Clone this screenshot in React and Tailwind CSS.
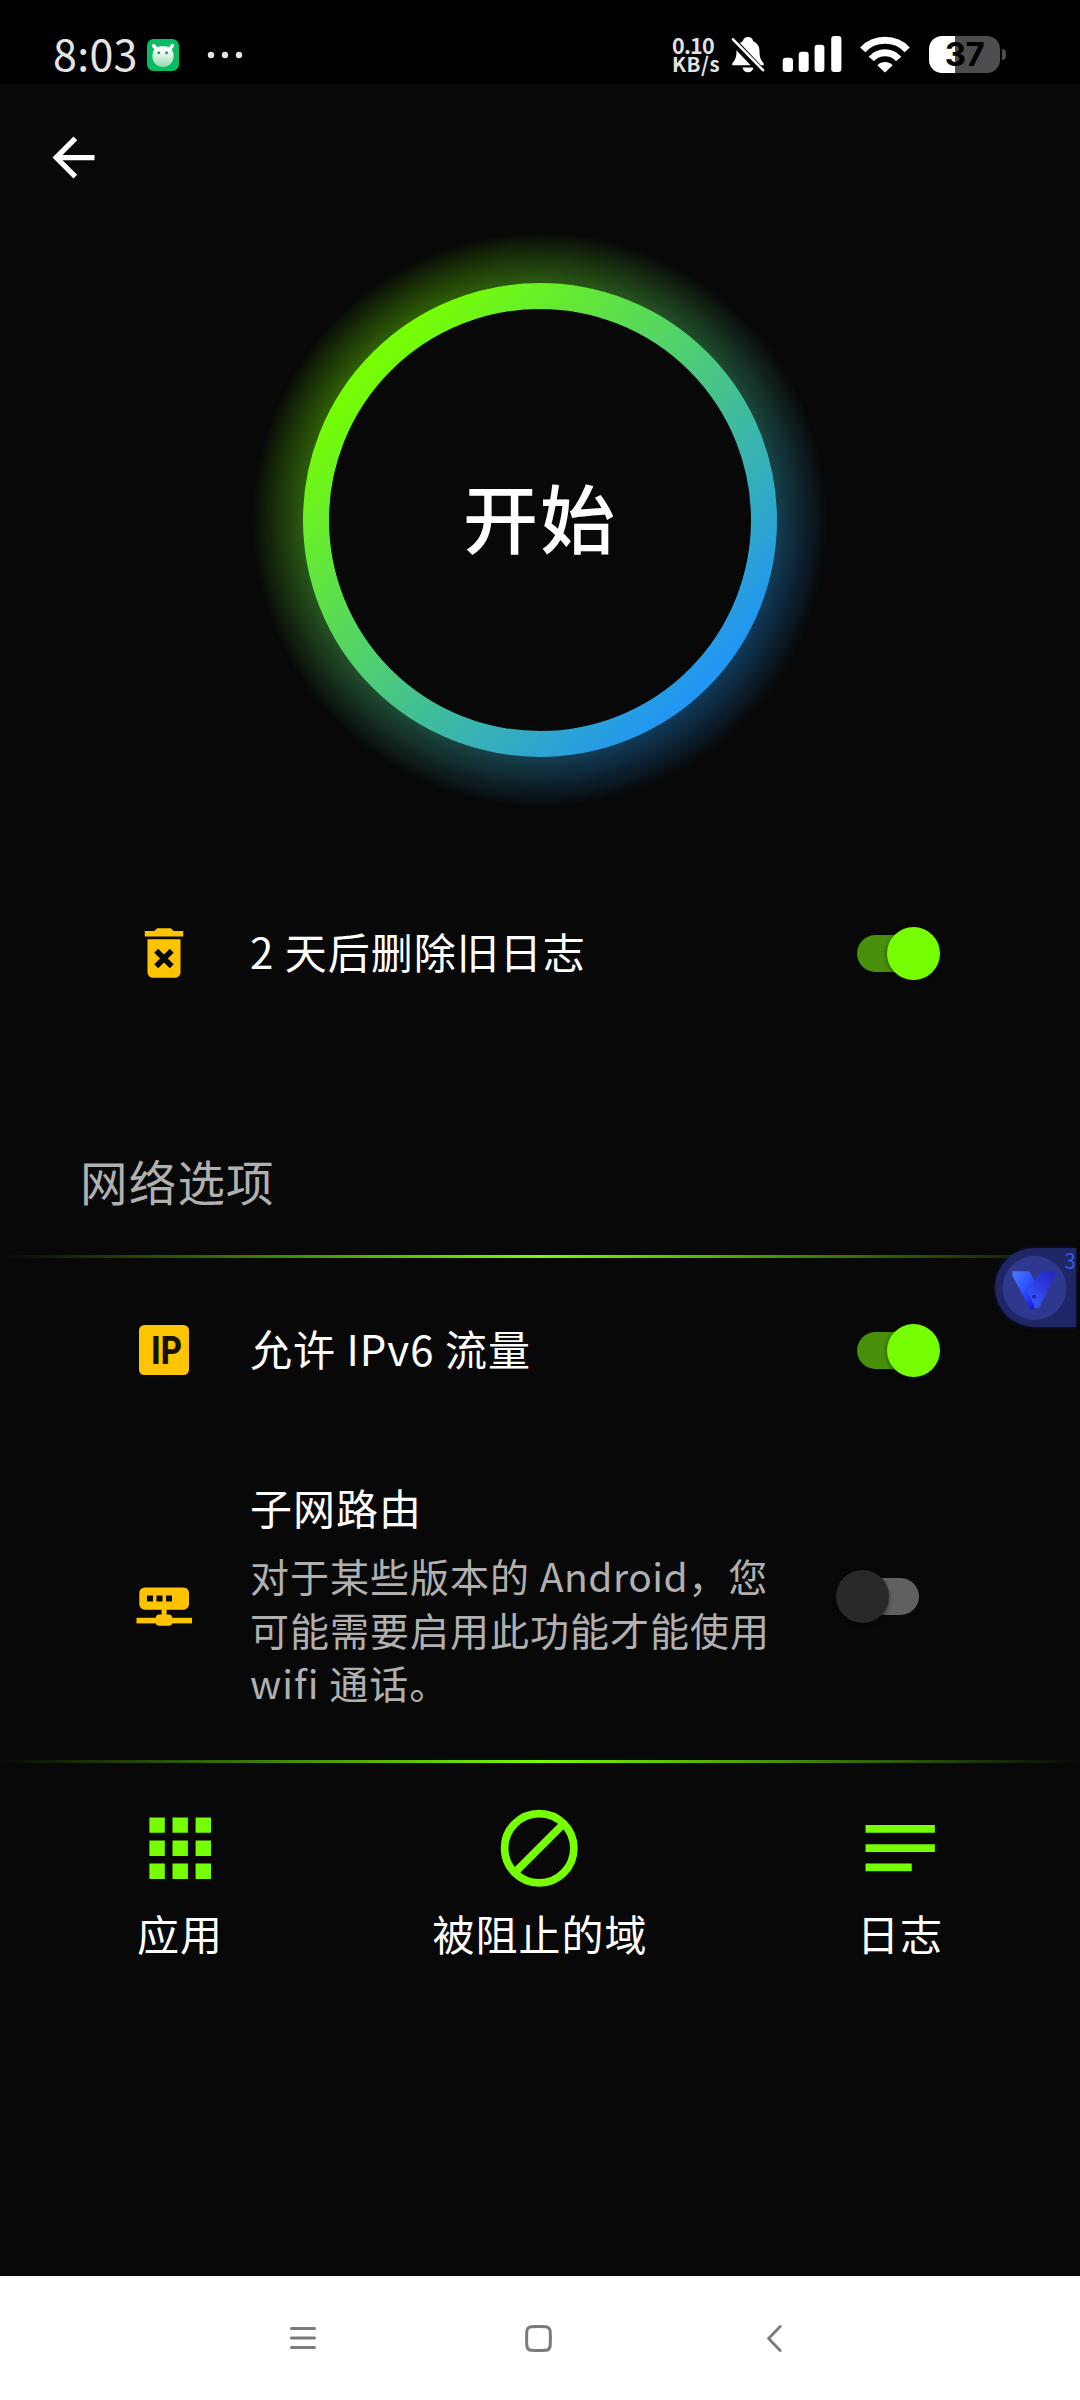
import React from "react";

const GREEN = "#76ff03";
const YELLOW = "#ffc400";

function StatusBar() {
  return (
    <header className="flex h-[84px] shrink-0 items-start bg-black pt-[36px]">
      <div className="-mt-[3px] ml-[53px] w-[94px] whitespace-nowrap text-[43px] leading-[38px] tracking-[0.300px] text-[#e4e4e4]">8:03</div>
      <svg width="32" height="32" viewBox="0 0 32 32" className="mt-[3px]">
        <defs>
          <linearGradient id="face" x1="0" y1="0" x2="0" y2="1">
            <stop offset="0.2" stopColor="#ffffff" />
            <stop offset="1" stopColor="#8fdcae" />
          </linearGradient>
        </defs>
        <rect width="32" height="32" rx="6.5" fill="#06bd63" />
        <path d="M6.6 6.6l3.4 4M25.400 6.600l-3.400 4" stroke="#fff" strokeWidth="3.600" strokeLinecap="round" />
        <path d="M16 7.200c3 0 5 .3 7.300 1.800 2.200 1.800 3.300 4.600 3.300 8C26.600 23.400 22 28 16 28S5.400 23.400 5.400 17c0-3.400 1.100-6.200 3.300-8C11 7.500 13 7.200 16 7.200z" fill="url(#face)" />
        <circle cx="11.800" cy="13.700" r="1.500" fill="#0fae62" />
        <circle cx="19.600" cy="13.700" r="1.500" fill="#0fae62" />
      </svg>
      <svg width="36" height="8" viewBox="0 0 36 8" className="ml-[28px] mt-[15px]" fill="#e4e4e4">
        <circle cx="4" cy="4" r="3.200" />
        <circle cx="18" cy="4" r="3.200" />
        <circle cx="32" cy="4" r="3.200" />
      </svg>
      <div className="ml-[429px] w-[59px] shrink-0 whitespace-nowrap font-bold text-[#e2e2e2]">
        <div className="-mt-[1px] text-[21.500px] leading-[19px] tracking-[-0.800px]">0.10</div>
        <div className="text-[20.500px] leading-[18px] tracking-[0.500px]">KB/s</div>
      </div>
      <svg width="34" height="38" viewBox="0 0 34 38" className="shrink-0">
        <path d="M17 1c2.700 0 4.700 1.600 5.200 4.200C26.500 7 28.500 10.500 28.500 15c0 6 1 8.500 4.200 12.500v1.700H1.300v-1.700C4.500 23.500 5.500 21 5.500 15c0-4.500 2-8 6.300-9.800C12.300 2.600 14.300 1 17 1z" fill="#fff" />
        <path d="M11.500 31.500h11c-.5 3-2.500 4.800-5.500 4.800s-5-1.800-5.500-4.800z" fill="#fff" />
        <path d="M-1 2L33 38" stroke="#000" strokeWidth="7.500" />
        <path d="M2 3.300L32 34.200" stroke="#fff" strokeWidth="2.600" strokeLinecap="round" />
      </svg>
      <svg width="60" height="38" viewBox="0 0 60 38" className="ml-[17px] shrink-0" fill="#fff">
        <rect x="0.700" y="21.700" width="10.300" height="14.300" rx="3" />
        <rect x="16.700" y="15.700" width="10" height="20.300" rx="3" />
        <rect x="32.600" y="8.700" width="9.800" height="27.300" rx="3" />
        <rect x="49.200" y="0" width="10.200" height="36" rx="3" />
      </svg>
      <svg width="50" height="38" viewBox="0 0 50 38" className="ml-[18px] shrink-0">
        <path d="M2.800 13.800C8.500 7.500 16.500 4.300 25 4.300s16.500 3.200 22.200 9.500" fill="none" stroke="#fff" strokeWidth="7" />
        <path d="M11.300 23C15 18.700 19.500 16.700 25 16.700s10 2 13.700 6.300" fill="none" stroke="#fff" strokeWidth="7" />
        <path d="M17.300 29.200c4.400-4.400 11-4.400 15.400 0L25 36.500z" fill="#fff" />
      </svg>
      <div className="ml-[19px] flex h-[37px] w-[71px] shrink-0 items-center justify-center rounded-[13px] bg-[linear-gradient(to_right,#fff_26.500px,#4d4d4d_26.500px)]">
        <span className="font-['Inter'] text-[33px] font-bold leading-[37px] tracking-[-0.500px] text-black">37</span>
      </div>
      <div className="ml-[2px] mt-[13px] h-[11px] w-[4px] rounded-r-full bg-[#4d4d4d]" />
    </header>
  );
}

function StartRing() {
  return (
    <div className="mt-[2px] grid h-[574px] shrink-0 place-items-center *:[grid-area:1/1]">
      <svg width="574" height="574" viewBox="-287 -287 574 574">
        <defs>
          <linearGradient id="ring" gradientUnits="userSpaceOnUse" x1="-162" y1="-162" x2="162" y2="162">
            <stop offset="0" stopColor={GREEN} />
            <stop offset="1" stopColor="#2196f3" />
          </linearGradient>
          <radialGradient id="fade" gradientUnits="userSpaceOnUse" cx="0" cy="0" r="287">
            <stop offset="0.820" stopColor="#fff" stopOpacity="0.360" />
            <stop offset="0.910" stopColor="#fff" stopOpacity="0.190" />
            <stop offset="1" stopColor="#fff" stopOpacity="0.010" />
          </radialGradient>
          <mask id="glow" maskUnits="userSpaceOnUse" x="-287" y="-287" width="574" height="574">
            <circle r="287" fill="url(#fade)" />
          </mask>
        </defs>
        <circle r="287" fill="url(#ring)" mask="url(#glow)" />
        <circle r="224" fill="#080808" stroke="url(#ring)" strokeWidth="26" />
      </svg>
      <button className="-mt-[8px] text-[75px] font-medium leading-[80px] tracking-[2px] text-white">开始</button>
    </div>
  );
}

function Switch({ on }) {
  return on ? (
    <span className="flex h-[53px] w-[83px] items-center">
      <span className="h-[37px] w-[56px] rounded-l-full bg-[#48900b]" />
      <span className="-ml-[26px] size-[53px] shrink-0 rounded-full bg-[#76ff03] shadow-[0_1px_5px_rgba(0,0,0,0.450)]" />
    </span>
  ) : (
    <span className="flex h-[53px] w-[83px] items-center">
      <span className="z-10 size-[53px] shrink-0 rounded-full bg-[#292929] shadow-[0_2px_4px_rgba(0,0,0,0.500)]" />
      <span className="-ml-[26px] h-[37px] w-[56px] rounded-r-full bg-[#606060]" />
    </span>
  );
}

function Divider() {
  return <div className="h-[3px] shrink-0 bg-[linear-gradient(to_right,transparent,#76ff03_50%,transparent)]" />;
}

const TrashIcon = () => (
  <svg width="66" height="66" viewBox="0 0 24 24" fill={YELLOW} className="-mt-[2px]">
    <path d="M6 19c0 1.100.9 2 2 2h8c1.100 0 2-.9 2-2V7H6v12zm2.460-7.120l1.410-1.410L12 12.590l2.120-2.120 1.410 1.410L13.410 14l2.120 2.120-1.410 1.410L12 15.410l-2.120 2.120-1.410-1.410L10.590 14l-2.130-2.120zM15.500 4l-1-1h-5l-1 1H5v2h14V4z" />
  </svg>
);

const IpIcon = () => (
  <svg width="66" height="66" viewBox="0 0 66 66" className="-mt-px">
    <rect x="8" y="8" width="50" height="50" rx="5.500" fill={YELLOW} />
    <text x="20" y="47" fontFamily="Roboto" fontWeight="800" fontSize="39.500" textLength="31" lengthAdjust="spacingAndGlyphs" fill="#171300">IP</text>
  </svg>
);

const RouterIcon = () => (
  <svg width="66" height="66" viewBox="0 0 66 66" className="mt-[21px]" fill={YELLOW}>
    <rect x="8.300" y="13.500" width="49.700" height="22.200" rx="5.500" />
    <rect x="30.600" y="35" width="5" height="8" />
    <rect x="24.800" y="40.500" width="16.400" height="11.300" rx="3.500" />
    <rect x="5.500" y="43.800" width="55.500" height="5.600" />
    <path d="M16 21.500h6v6h-6zM25.500 21.500h6v6h-6zM35 21.500h6v6h-6z" fill="#080808" />
  </svg>
);

function Label({ children }) {
  return <span className="whitespace-nowrap text-[42px] leading-[60px] tracking-[1px] text-white">{children}</span>;
}

function OptionRow({ icon, children, on, className }) {
  return (
    <div className={`flex shrink-0 items-center pl-[131px] ${className}`}>
      {icon}
      <div className="-mt-[6px] ml-[53px] flex w-[607px] flex-col">{children}</div>
      {!on && <span className="-ml-[21px]" />}
      <Switch on={on} />
    </div>
  );
}

function TabItem({ icon, label }) {
  return (
    <button className="flex w-[360px] flex-col items-center">
      <svg width="92.400" height="92.400" viewBox="0 0 24 24" fill={GREEN}>{icon}</svg>
      <span className="mt-[9px] block">
        <Label>{label}</Label>
      </span>
    </button>
  );
}

function FloatingBadge() {
  return (
    <div className="absolute right-[4px] top-[1248px] h-[79px] w-[81px] rounded-l-full bg-[#222a70]/90 shadow-[0_0_4px_#222a7088]">
      <svg width="81" height="79" viewBox="0 0 81 79" className="overflow-visible">
        <defs>
          <linearGradient id="vl" x1="0" y1="0" x2="1" y2="1">
            <stop offset="0" stopColor="#4a7dff" />
            <stop offset="0.550" stopColor="#2b4bfa" />
            <stop offset="1" stopColor="#1010d8" />
          </linearGradient>
          <linearGradient id="vr" x1="1" y1="0" x2="0" y2="1">
            <stop offset="0" stopColor="#2424b8" />
            <stop offset="0.500" stopColor="#2c3ce0" />
            <stop offset="1" stopColor="#3c64ff" />
          </linearGradient>
        </defs>
        <circle cx="39.500" cy="40" r="32" fill="#2e388f" />
        <path d="M17.300 23.300H34L41 35l-3 27-3 -1.800L17.500 28z" fill="url(#vl)" />
        <path d="M46.500 23.300H63L44.500 59q-1.500 2-4 1L33 45q-.8-1.800.2-3.500z" fill="url(#vr)" />
        <circle cx="39" cy="48.700" r="1.900" fill="#1a22a0" />
        <text x="69.500" y="21.300" fontSize="21.500" fill="#3457e6" textLength="11.200" lengthAdjust="spacingAndGlyphs">3</text>
      </svg>
    </div>
  );
}

export default function App() {
  return (
    <div className="relative flex h-[2400px] w-[1080px] flex-col overflow-hidden bg-[#080808] font-['Noto_Sans_CJK_SC',sans-serif]">
      <StatusBar />
      <div className="flex h-[147px] shrink-0 items-center pl-[42px]">
        <svg width="63" height="63" viewBox="0 0 24 24" fill="#fff">
          <path d="M20 11H7.830l5.590-5.590L12 4l-8 8 8 8 1.410-1.410L7.830 13H20v-2z" />
        </svg>
      </div>
      <StartRing />
      <OptionRow className="h-[293px]" icon={<TrashIcon />} on>
        <Label>2 天后删除旧日志</Label>
      </OptionRow>
      <h2 className="flex h-[155px] shrink-0 items-center pl-[80px] pt-[6px] text-[47.500px] leading-[60px] tracking-[1.200px] text-[#b0b0b0]">网络选项</h2>
      <Divider />
      <OptionRow className="h-[185px]" icon={<IpIcon />} on>
        <Label>允许 IPv6 流量</Label>
      </OptionRow>
      <OptionRow className="h-[307px]" icon={<RouterIcon />} on={false}>
        <Label>子网路由</Label>
        <p className="mt-[12px] whitespace-nowrap text-[39px] leading-[53.500px] tracking-[1px] text-[#b0b0b0]">
          对于某些版本的 <span className="tracking-[0.500px]">Android</span>，您
          <br />
          可能需要启用此功能才能使用
          <br />
          wifi 通话。
        </p>
      </OptionRow>
      <div className="h-[10px] shrink-0" />
      <Divider />
      <nav className="flex pt-[39px]">
        <TabItem
          label="应用"
          icon={<path d="M4 8h4V4H4v4zm6 12h4v-4h-4v4zm-6 0h4v-4H4v4zm0-6h4v-4H4v4zm6 0h4v-4h-4v4zm6-10v4h4V4h-4zm-6 4h4V4h-4v4zm6 6h4v-4h-4v4zm0 6h4v-4h-4v4z" />}
        />
        <TabItem
          label="被阻止的域"
          icon={<path d="M11.750 3a9 9 0 1 0 0 18 9 9 0 0 0 0-18zM5.550 18.200L17.950 5.800" fill="none" stroke={GREEN} strokeWidth="2" />}
        />
        <TabItem label="日志" icon={<path d="M3 18h12v-2H3v2zM3 6v2h18V6H3zm0 7h18v-2H3v2z" />} />
      </nav>
      <footer className="mt-auto flex h-[125px] shrink-0 items-center border-t border-black bg-white pl-[290px] text-[#7b7b7b]">
        <svg width="26" height="22" viewBox="0 0 26 22" stroke="currentColor" strokeWidth="3" strokeLinecap="round">
          <path d="M1.500 1.500h23M1.500 11h23M1.500 20.500h23" />
        </svg>
        <svg width="27" height="27" viewBox="0 0 27 27" className="ml-[209px]" fill="none" stroke="currentColor" strokeWidth="3">
          <path d="M6.500 1.700Q13.500 1.200 20.500 1.700 24.800 2 25.200 6.500 25.600 13.500 25.200 20.500 24.800 25 20.500 25.300 13.500 25.800 6.500 25.300 2.200 25 1.800 20.500 1.400 13.500 1.800 6.500 2.200 2 6.500 1.700z" />
        </svg>
        <svg width="15" height="27" viewBox="0 0 15 27" className="ml-[215px]" fill="none" stroke="currentColor" strokeWidth="2.800" strokeLinecap="round" strokeLinejoin="round">
          <path d="M13.200 1.500L1.600 13.500l11.600 12" />
        </svg>
      </footer>
      <FloatingBadge />
    </div>
  );
}
